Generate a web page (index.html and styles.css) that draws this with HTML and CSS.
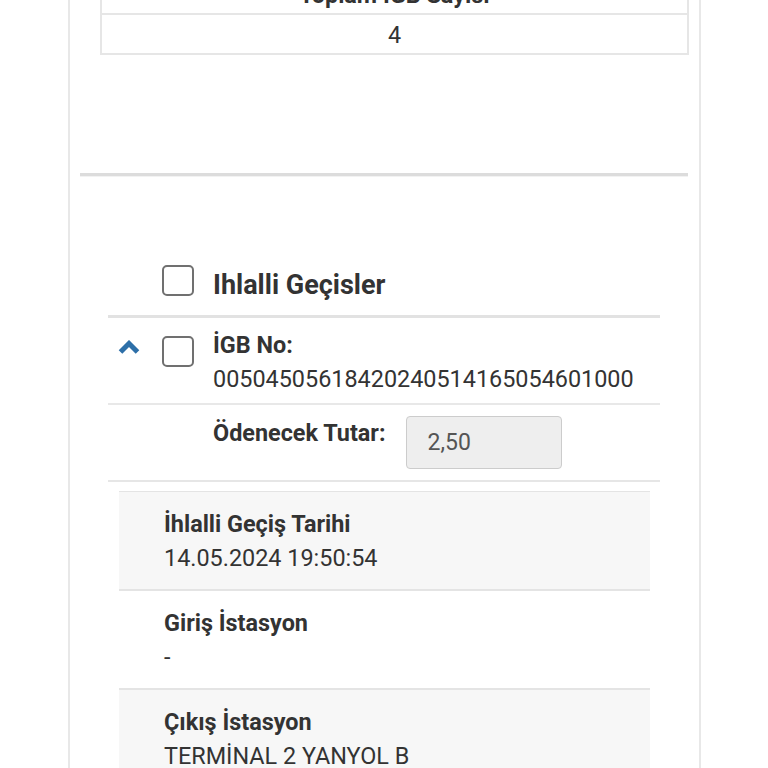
FILE: index.html
```html
<!DOCTYPE html>
<html lang="tr">
<head>
<meta charset="utf-8">
<link rel="stylesheet" href="styles.css">
</head>
<body>
<div class="panel">
  <table class="summary">
    <tr><th>Toplam İGB Sayısı</th></tr>
    <tr><td>4</td></tr>
  </table>
  <hr class="rule">
  <div class="violations">
    <div class="vhead">
      <span class="box"></span>
      <span class="vtitle">Ihlalli Geçisler</span>
    </div>
    <div class="item">
      <span class="chev"><svg width="22" height="14" viewBox="0 0 22 14"><polyline points="2.5,12 11,3.5 19.5,12" fill="none" stroke="#2d6fa8" stroke-width="5"/></svg></span>
      <span class="box"></span>
      <div class="itext">
        <div class="lbl">İGB No:</div>
        <div class="val">00504505618420240514165054601000</div>
      </div>
    </div>
    <div class="pay">
      <div class="lbl">Ödenecek Tutar:</div>
      <div class="amount">2,50</div>
    </div>
    <div class="details">
      <div class="drow shade">
        <div class="lbl">İhlalli Geçiş Tarihi</div>
        <div class="val">14.05.2024 19:50:54</div>
      </div>
      <div class="drow">
        <div class="lbl">Giriş İstasyon</div>
        <div class="val">-</div>
      </div>
      <div class="drow shade">
        <div class="lbl">Çıkış İstasyon</div>
        <div class="val">TERMİNAL 2 YANYOL B</div>
      </div>
    </div>
  </div>
</div>
</body>
</html>
```
FILE: styles.css
```css
html, body {
  margin: 0;
  padding: 0;
  background: #fff;
  overflow: hidden;
}
body {
  font-family: Roboto, "Noto Sans", sans-serif;
  font-size: 23.4px;
  line-height: 34px;
  color: #333;
}
.panel {
  margin-left: 68px;
  width: 608px;
  border-left: 2px solid #e8e8e8;
  border-right: 2px solid #e8e8e8;
  padding: 0 11px 0 10px;
  height: 800px;
}
.summary {
  margin: -26px 0 0 20px;
  width: 589px;
  border-collapse: collapse;
  text-align: center;
}
.summary th, .summary td {
  border: 2px solid #e6e6e6;
  line-height: 34px;
}
.summary th {
  font-weight: 700;
  padding: 2px 8px 1px;
}
.summary td {
  padding: 3px 8px 1px;
}
.rule {
  margin: 118px 0 0 0;
  border: 0;
  border-top: 3px solid #dcdcdc;
  border-bottom: 1px solid #f2f2f2;
  height: 0;
}
.violations {
  margin: 0 28px;
}
.vhead {
  display: flex;
  align-items: flex-start;
  padding: 87px 0 12px 54px;
  border-bottom: 3px solid #e2e2e2;
}
.box {
  display: block;
  width: 28px;
  height: 27px;
  border: 2px solid #707070;
  border-radius: 5px;
  flex: none;
}
.vhead .box {
  margin-top: 1px;
}
.vtitle {
  margin-left: 19px;
  font-size: 27px;
  font-weight: 700;
  line-height: 36px;
  margin-top: 3px;
}
.item {
  display: flex;
  align-items: flex-start;
  padding: 10px 0 7px 10px;
  border-bottom: 2px solid #e8e8e8;
}
.chev {
  width: 44px;
  padding-top: 12px;
  flex: none;
  line-height: 0;
}
.item .box {
  margin-top: 8px;
}
.itext {
  margin-left: 19px;
}
.lbl {
  font-weight: 700;
}
.pay {
  display: flex;
  align-items: flex-start;
  padding: 11px 0 11px 105px;
  border-bottom: 2px solid #e6e6e6;
}
.amount {
  margin-left: 20px;
  width: 133px;
  height: 51px;
  line-height: 51px;
  padding-left: 21px;
  background: #eee;
  border: 1px solid #ccc;
  border-radius: 4px;
  color: #555;
  font-size: 23px;
}
.details {
  margin: 9px 10px 0 11px;
  border-top: 1px solid #e4e4e4;
}
.drow {
  padding: 15px 0 14px 45px;
  border-bottom: 2px solid #e4e4e4;
}
.drow.shade {
  background: #f7f7f7;
}
```
